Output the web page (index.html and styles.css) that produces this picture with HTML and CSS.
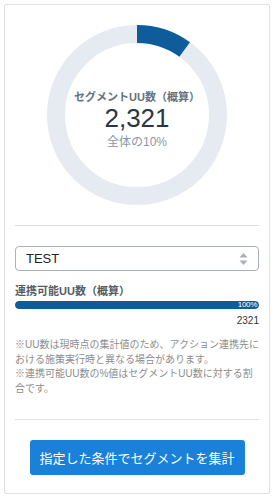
FILE: index.html
```html
<!DOCTYPE html>
<html lang="ja">
<head>
    <meta charset="UTF-8">
    <meta name="viewport" content="width=device-width, initial-scale=1.0">
    <title>セグメント集計</title>
    <link rel="stylesheet" href="styles.css">
</head>
<body>
    <div class="card">
        <div class="donut">
            <svg width="180" height="180" viewBox="0 0 180 180">
                <circle cx="90" cy="90" r="81" fill="none" stroke="#e6ebf2" stroke-width="18"/>
                <circle cx="90" cy="90" r="81" fill="none" stroke="#0f5c9c" stroke-width="18"
                        stroke-dasharray="50.9 508.9" transform="rotate(-90 90 90)"/>
            </svg>
            <div class="donut-text">
                <div class="donut-label">セグメントUU数（概算）</div>
                <div class="donut-value">2,321</div>
                <div class="donut-sub">全体の10%</div>
            </div>
        </div>

        <hr class="divider">

        <div class="select">
            <span>TEST</span>
            <svg class="arrows" width="9" height="14" viewBox="0 0 9 14">
                <path d="M4.5 1 L8.5 5.5 L0.5 5.5 Z" fill="#a6aeb8"/>
                <path d="M4.5 13 L8.5 8.5 L0.5 8.5 Z" fill="#a6aeb8"/>
            </svg>
        </div>

        <div class="sync-label">連携可能UU数（概算）</div>
        <div class="bar">
            <div class="bar-fill" style="width: 100%">100%</div>
        </div>
        <div class="bar-count">2321</div>

        <p class="notes">※UU数は現時点の集計値のため、アクション連携先における施策実行時と異なる場合があります。<br>※連携可能UU数の%値はセグメントUU数に対する割合です。</p>

        <hr class="divider divider-bottom">

        <div class="actions">
            <button class="btn">指定した条件でセグメントを集計</button>
        </div>
    </div>
</body>
</html>
```

FILE: styles.css
```css
body {
    margin: 4px;
    font-family: "Liberation Sans", "Noto Sans CJK JP", sans-serif;
    background: #fff;
}
.card {
    width: 266px;
    height: 490px;
    box-sizing: border-box;
    border: 1px solid #dcdfe3;
    border-radius: 2px;
    padding: 20px 10px 0 10px;
}
.donut {
    position: relative;
    width: 180px;
    height: 180px;
    margin: 0 auto;
}
.donut svg {
    display: block;
}
.donut-text {
    position: absolute;
    left: 0;
    top: 0;
    width: 180px;
    height: 180px;
    display: flex;
    flex-direction: column;
    align-items: center;
    justify-content: center;
    padding-top: 10px;
    box-sizing: border-box;
}
.donut-label {
    font-size: 11px;
    font-weight: bold;
    color: #66717d;
    line-height: 14px;
    margin-bottom: -1px;
}
.donut-value {
    font-size: 26px;
    color: #2b3644;
    line-height: 30px;
}
.donut-sub {
    font-size: 12px;
    color: #8c97a3;
    line-height: 16px;
    margin-top: 1px;
}
.divider {
    border: none;
    border-top: 1px solid #dddfe2;
    margin: 20px 0 0 0;
}
.select {
    margin-top: 20px;
    height: 25px;
    box-sizing: border-box;
    border: 1px solid #a9b0b8;
    border-radius: 4px;
    display: flex;
    align-items: center;
    justify-content: space-between;
    padding: 0 10px 0 10px;
    font-size: 13px;
    color: #222;
}
.sync-label {
    margin-top: 13px;
    font-size: 11px;
    font-weight: bold;
    color: #555c63;
    line-height: 14px;
}
.bar {
    margin-top: 3px;
    height: 8px;
    background: #e6ebf2;
    border-radius: 4px;
    overflow: hidden;
}
.bar-fill {
    height: 8px;
    background: #0f5c9c;
    border-radius: 4px;
    color: #fff;
    font-size: 8px;
    line-height: 8px;
    text-align: right;
    padding-right: 2px;
    box-sizing: border-box;
    letter-spacing: -0.3px;
}
.bar-count {
    text-align: right;
    font-size: 10px;
    color: #333;
    margin-top: 6px;
    line-height: 12px;
}
.notes {
    margin: 11px -3px 0 0;
    font-size: 10px;
    line-height: 14.5px;
    color: #8d8d8d;
}
.divider-bottom {
    margin-top: 23px;
}
.actions {
    display: flex;
    justify-content: center;
    margin-top: 20px;
}
.btn {
    width: 215px;
    height: 35px;
    background: #1a80d8;
    color: #fff;
    border: none;
    border-radius: 3px;
    font-family: "Liberation Sans", "Noto Sans CJK JP", sans-serif;
    font-size: 13px;
    padding: 0;
}
```
